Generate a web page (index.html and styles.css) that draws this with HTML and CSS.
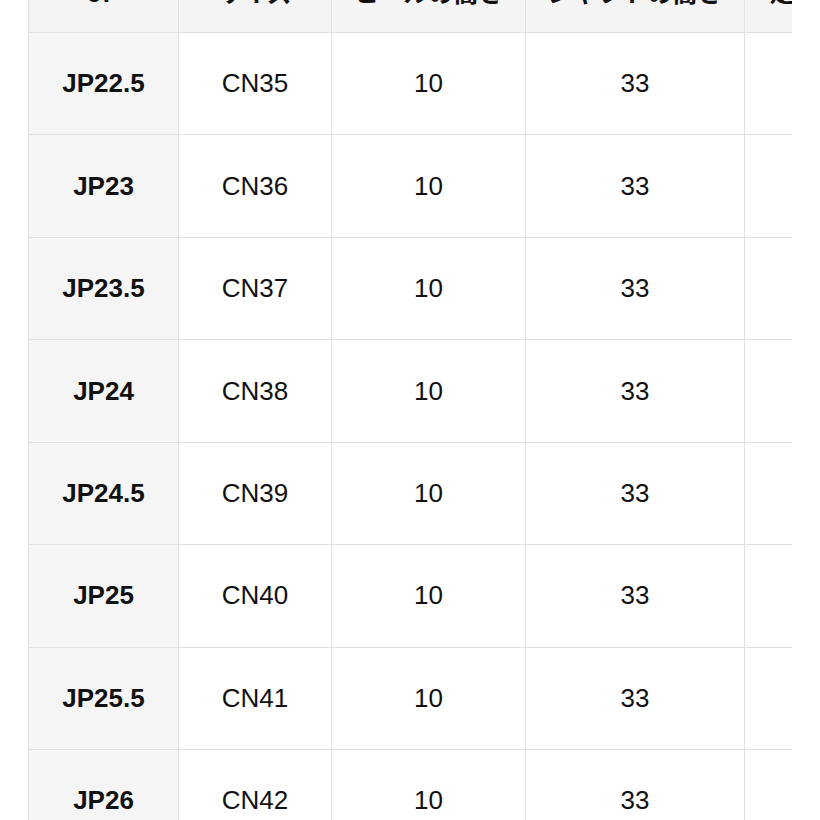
FILE: index.html
```html
<!DOCTYPE html>
<html lang="ja">
<head>
<meta charset="utf-8">
<title>サイズ表</title>
<link rel="stylesheet" href="styles.css">
</head>
<body>
<div class="wrap">
<table class="size-table">
<thead>
<tr>
<th class="c1">JP</th>
<th class="c2">サイズ</th>
<th class="c3">ヒールの高さ</th>
<th class="c4">シャフトの高さ</th>
<th class="c5">足首周り</th>
</tr>
</thead>
<tbody>
<tr><td class="key">JP22.5</td><td>CN35</td><td>10</td><td>33</td><td></td></tr>
<tr><td class="key">JP23</td><td>CN36</td><td>10</td><td>33</td><td></td></tr>
<tr><td class="key">JP23.5</td><td>CN37</td><td>10</td><td>33</td><td></td></tr>
<tr><td class="key">JP24</td><td>CN38</td><td>10</td><td>33</td><td></td></tr>
<tr><td class="key">JP24.5</td><td>CN39</td><td>10</td><td>33</td><td></td></tr>
<tr><td class="key">JP25</td><td>CN40</td><td>10</td><td>33</td><td></td></tr>
<tr><td class="key">JP25.5</td><td>CN41</td><td>10</td><td>33</td><td></td></tr>
<tr><td class="key">JP26</td><td>CN42</td><td>10</td><td>33</td><td></td></tr>
</tbody>
</table>
</div>
</body>
</html>
```
FILE: styles.css
```css
html, body {
  margin: 0;
  padding: 0;
  background: #ffffff;
}
body {
  height: 820px;
  overflow: hidden;
}
.wrap {
  margin-left: 28px;
  width: 764px;
  overflow: hidden;
}
.size-table {
  table-layout: fixed;
  width: 866px;
  border-collapse: separate;
  border-spacing: 0;
  border-left: 1px solid #e0e0e0;
  margin-top: -69.4px;
  font-family: "Liberation Sans", Arial, "Noto Sans CJK JP", sans-serif;
  font-size: 26px;
  color: #111111;
}
.size-table th,
.size-table td {
  box-sizing: border-box;
  border-right: 1px solid #e0e0e0;
  border-bottom: 1px solid #e0e0e0;
  text-align: center;
  padding: 0;
}
.size-table tr {
  height: 102.43px;
}
.size-table th {
  background: #f4f4f4;
  font-family: "Noto Sans CJK JP", "Liberation Sans", sans-serif;
  font-size: 25px;
  font-weight: 700;
  vertical-align: bottom;
  padding-bottom: 26px;
  line-height: 30px;
}
.size-table td {
  background: #ffffff;
  vertical-align: middle;
}
.size-table td.key {
  background: #f5f5f5;
  font-weight: 700;
}
.c1 { width: 150px; }
.c2 { width: 153px; }
.c3 { width: 194px; }
.c4 { width: 219px; }
.c5 { width: 150px; }
```
